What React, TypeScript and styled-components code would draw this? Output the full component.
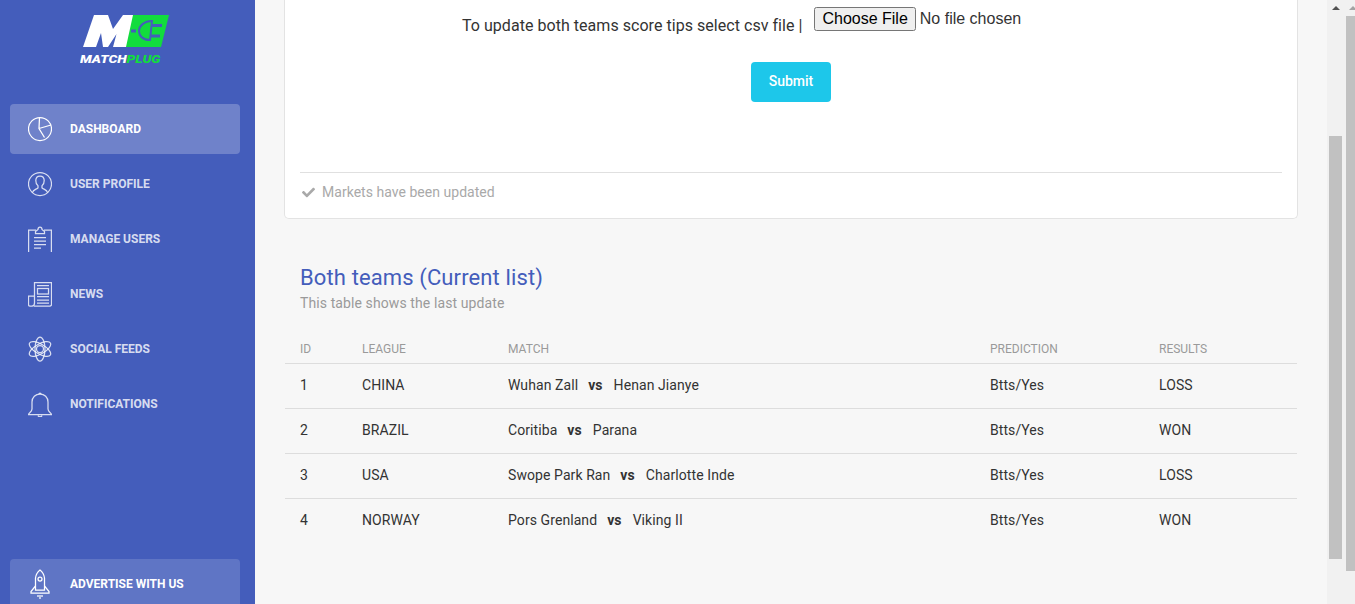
import React from "react";
import styled, { createGlobalStyle } from "styled-components";
import { FaCheck } from "react-icons/fa";

const Global = createGlobalStyle`
  html, body { margin: 0; padding: 0; height: 100%; overflow: hidden; }
  body { font-family: Roboto, "Liberation Sans", sans-serif; background: #f7f7f7; }
  #root { height: 100%; }
  * { box-sizing: border-box; }
`;

const Page = styled.div`
  display: flex;
  width: 1355px;
  height: 604px;
  overflow: hidden;
`;

const Sidebar = styled.aside`
  width: 255px;
  flex-shrink: 0;
  height: 604px;
  overflow: hidden;
  background: #445dbb;
  display: flex;
  flex-direction: column;
`;

const LogoWrap = styled.div`
  height: 104px;
  padding: 12px 0 0 80px;
`;

const LogoMark = styled.svg`
  display: block;
  width: 92px;
  height: 38px;
`;

const LogoText = styled.div`
  font: italic 900 11.5px/12px Roboto, sans-serif;
  color: #fff;
  margin-top: 3px;
  transform: scaleX(1.2);
  transform-origin: left center;
  & span { color: #12dc3d; }
`;

const NavList = styled.nav`
  display: flex;
  flex-direction: column;
  gap: 5px;
  flex: 1;
`;

const NavItem = styled.a<{ $tone?: "active" | "promo" }>`
  display: flex;
  align-items: center;
  flex-shrink: 0;
  height: 50px;
  margin: 0 15px 0 10px;
  padding-left: 18px;
  border-radius: 4px;
  font-size: 12px;
  font-weight: 700;
  text-transform: uppercase;
  color: ${p => (p.$tone ? "#fff" : "rgba(255,255,255,.8)")};
  background: ${p =>
    p.$tone === "active" ? "rgba(255,255,255,.23)" : p.$tone === "promo" ? "rgba(255,255,255,.15)" : "transparent"};
`;

const PromoItem = styled(NavItem)`
  margin-top: auto;
  margin-bottom: -5px;
`;

const NavIcon = styled.svg<{ $tall?: boolean }>`
  width: 24px;
  height: ${p => (p.$tall ? 30 : 26)}px;
  margin-right: 18px;
  fill: none;
  stroke: currentColor;
  stroke-width: 1.25;
  flex-shrink: 0;
`;

const Main = styled.main`
  width: 1072px;
  flex-shrink: 0;
  padding: 0 29px;
  background: #f7f7f7;
`;

const Card = styled.section`
  height: 219px;
  background: #fff;
  border: 1px solid #e3e3e3;
  border-top: 0;
  border-radius: 0 0 5px 5px;
  padding: 0 15px;
  display: flex;
  flex-direction: column;
`;

const UploadRow = styled.div`
  display: flex;
  align-items: flex-start;
  padding: 7px 0 0 162px;
  height: 62px;
`;

const UploadLabel = styled.span`
  font-size: 16px;
  line-height: 22px;
  letter-spacing: 0.04px;
  margin: 8px 12px 0 0;
  color: #333;
`;

const FileInput = styled.input`
  font: 16px "Liberation Sans", Arial, sans-serif;
  color: #333;
  width: 260px;
  height: 24px;
`;

const SubmitRow = styled.div`
  display: flex;
  justify-content: center;
  height: 110px;
`;

const SubmitButton = styled.button`
  width: 80px;
  height: 40px;
  border: 0;
  border-radius: 4px;
  padding: 0 0 2px;
  background: #1dc7ea;
  color: #fff;
  font: 500 14px Roboto, sans-serif;
`;

const CardFooter = styled.div`
  display: flex;
  align-items: center;
  gap: 7px;
  border-top: 1px solid #e0e0e0;
  padding: 9px 2px 0;
  font-size: 14px;
  line-height: 20px;
  letter-spacing: 0.03px;
  color: #a9a9a9;
`;

const TableHead = styled.header`
  padding: 44px 0 0 16px;
`;

const Title = styled.h2`
  margin: 0;
  font-size: 22px;
  line-height: 30px;
  font-weight: 400;
  letter-spacing: 0.12px;
  color: #445dbb;
`;

const Subtitle = styled.p`
  margin: 0;
  font-size: 14px;
  line-height: 20px;
  letter-spacing: 0.1px;
  color: #9a9a9a;
`;

const Table = styled.table`
  width: 1012px;
  margin: 15px 0 0 1px;
  border-collapse: collapse;
  table-layout: fixed;
`;

const Th = styled.th<{ $w?: number }>`
  width: ${p => (p.$w ? `${p.$w}px` : "auto")};
  height: 35px;
  padding: 7px 0 0 15px;
  text-align: left;
  font-size: 12px;
  font-weight: 400;
  text-transform: uppercase;
  color: #9a9a9a;
  border-bottom: 1px solid #ddd;
`;

const Td = styled.td`
  height: 45px;
  padding: 0 0 1px 15px;
  font-size: 14px;
  letter-spacing: 0.08px;
  color: #333;
`;

const Row = styled.tr`
  & + & { border-top: 1px solid #ddd; }
`;

const Vs = styled.b`
  margin: 0 11px 0 10px;
  font-weight: 700;
`;

const Scrollbars = styled.div`
  width: 28px;
  flex-shrink: 0;
  height: 604px;
  display: flex;
  overflow: hidden;
  background: #f1f1f1;
`;

const ScrollColumn = styled.div`
  width: 17px;
  flex-shrink: 0;
  padding: 6px 2px 0;
`;

const Arrow = styled.div<{ $color: string }>`
  width: 0;
  height: 0;
  margin: 0 auto;
  border-left: 4px solid transparent;
  border-right: 4px solid transparent;
  border-bottom: 4px solid ${p => p.$color};
`;

const Thumb = styled.div<{ $top: number; $height: number }>`
  width: 13px;
  margin-top: ${p => p.$top}px;
  height: ${p => p.$height}px;
  background: #c1c1c1;
`;

const items = [
  { label: "User Profile", icon: (
    <>
      <circle cx="12" cy="13" r="11.5" />
      <path d="M4.500 21.500c.5-3 4.500-3.200 5.500-4.700v-2c-1.500-1-2.200-3-2.200-5.300C7.800 6.600 9.500 5 12 5s4.200 1.600 4.200 4.500c0 2.300-.7 4.300-2.200 5.300v2c1 1.500 5 1.700 5.500 4.700" />
    </>
  ) },
  { label: "Manage Users", icon: (
    <>
      <path d="M8 4H.6v22.500h22.800V4H16" />
      <path d="M7.500 7.500h9V5.500L14 3.500C14 2 13.200 1 12 1S10 2 10 3.500L7.500 5.500z" />
      <path d="M6 11.500h12M6 15h12M6 18.500h12M6 22h7" />
    </>
  ) },
  { label: "News", icon: (
    <>
      <path d="M6 25h16a1.500 1.500 0 0 0 1.500-1.500V1.500H6.500V22c0 2-1 3-2.500 3H2c-1 0-1.500-.7-1.500-1.500V15h6" />
      <path d="M9 4.500h12M9 19h12M9 22h12M9 15.500h12" />
      <rect x="9.500" y="7.500" width="11" height="5.500" />
    </>
  ) },
  { label: "Social Feeds", icon: (
    <>
      <circle cx="12" cy="13" r="3.500" />
      <ellipse cx="12" cy="13" rx="5" ry="12" />
      <ellipse cx="12" cy="13" rx="5" ry="12" transform="rotate(60 12 13)" />
      <ellipse cx="12" cy="13" rx="5" ry="12" transform="rotate(-60 12 13)" />
    </>
  ) },
  { label: "Notifications", icon: (
    <>
      <path d="M.5 23.500h23c0-1.500-3.500-2.500-3.500-5.500v-7c0-4.500-3.500-8-8-8s-8 3.500-8 8v7c0 3-3.500 4-3.500 5.500z" />
      <path d="M11 3c0-1.300 2-1.300 2 0M10 24.500c.5 1.700 3.500 1.700 4 0" />
    </>
  ) },
];

const rows = [
  ["1", "CHINA", "Wuhan Zall", "Henan Jianye", "LOSS"],
  ["2", "BRAZIL", "Coritiba", "Parana", "WON"],
  ["3", "USA", "Swope Park Ran", "Charlotte Inde", "LOSS"],
  ["4", "NORWAY", "Pors Grenland", "Viking II", "WON"],
];

export default function App() {
  return (
    <Page>
      <Global />
      <Sidebar>
        <LogoWrap>
          <LogoMark viewBox="0 0 92 38">
            <path fill="#12dc3d" d="M50 3h39l-8 32H45z" />
            <path fill="#fff" d="M3 35 14 3h14l5 14L43 3h10L46 35H33l3.500-13L28 35h-5l-2-14-5 14z" />
            <path fill="#12dc3d" stroke="#445dbb" strokeWidth="2" d="M72 9 70 28c-7 0-11-4-11-9s5-10 13-10z" />
            <path stroke="#445dbb" strokeWidth="3" d="M72 13.500h10M70 24h10" />
            <path stroke="#445dbb" strokeWidth="3" d="M51 19h5" />
          </LogoMark>
          <LogoText>
            MATCH<span>PLUG</span>
          </LogoText>
        </LogoWrap>
        <NavList>
          <NavItem $tone="active">
            <NavIcon viewBox="0 0 24 26">
              <circle cx="12" cy="13" r="11.500" />
              <path d="M11.500 1.500 11 12.500l5.500 9M11 12.500l12-3.500" />
            </NavIcon>
            Dashboard
          </NavItem>
          {items.map(item => (
            <NavItem key={item.label}>
              <NavIcon viewBox="0 0 24 26">{item.icon}</NavIcon>
              {item.label}
            </NavItem>
          ))}
          <PromoItem $tone="promo">
            <NavIcon $tall viewBox="0 0 24 30">
              <path d="M7.500 21V9C8 5 10 2.500 12 1c2 1.500 4 4 4.500 8v12z" />
              <circle cx="12" cy="10" r="2" />
              <path d="M7.500 17 3 22.500v1.500h18v-1.500L16.500 17M10 26v2M12 26v4M14 26v2" />
            </NavIcon>
            Advertise with us
          </PromoItem>
        </NavList>
      </Sidebar>
      <Main>
        <Card>
          <UploadRow>
            <UploadLabel>To update both teams score tips select csv file |</UploadLabel>
            <FileInput type="file" />
          </UploadRow>
          <SubmitRow>
            <SubmitButton>Submit</SubmitButton>
          </SubmitRow>
          <CardFooter>
            <FaCheck size={13} />
            Markets have been updated
          </CardFooter>
        </Card>
        <TableHead>
          <Title>Both teams (Current list)</Title>
          <Subtitle>This table shows the last update</Subtitle>
        </TableHead>
        <Table>
          <thead>
            <tr>
              <Th $w={62}>ID</Th>
              <Th $w={146}>League</Th>
              <Th $w={482}>Match</Th>
              <Th $w={169}>Prediction</Th>
              <Th>Results</Th>
            </tr>
          </thead>
          <tbody>
            {rows.map(r => (
              <Row key={r[0]}>
                <Td>{r[0]}</Td>
                <Td>{r[1]}</Td>
                <Td>
                  {r[2]}
                  <Vs>vs</Vs>
                  {r[3]}
                </Td>
                <Td>Btts/Yes</Td>
                <Td>{r[4]}</Td>
              </Row>
            ))}
          </tbody>
        </Table>
      </Main>
      <Scrollbars>
        <ScrollColumn>
          <Arrow $color="#505050" />
          <Thumb $top={126} $height={423} />
        </ScrollColumn>
        <ScrollColumn>
          <Arrow $color="#a3a3a3" />
          <Thumb $top={6} $height={555} />
        </ScrollColumn>
      </Scrollbars>
    </Page>
  );
}
